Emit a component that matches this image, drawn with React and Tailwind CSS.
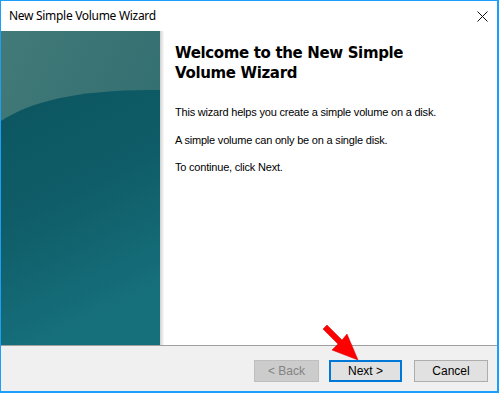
import React from "react";

function SidePanel() {
  return (
    <svg width="159" height="314" viewBox="0 0 159 314" className="block">
      <defs>
        <linearGradient id="top" x1="0" y1="0" x2="1" y2="1">
          <stop offset="0" stopColor="#437a79" />
          <stop offset="1" stopColor="#2a686c" />
        </linearGradient>
        <linearGradient id="bot" x1="0" y1="0" x2="0.3" y2="1">
          <stop offset="0" stopColor="#0b5560" />
          <stop offset="0.5" stopColor="#0f5d68" />
          <stop offset="1" stopColor="#16707c" />
        </linearGradient>
      </defs>
      <rect x="0" y="0" width="159" height="314" fill="url(#top)" />
      <path d="M0 90 C 30 70, 80 58, 159 59 L159 314 L0 314 Z" fill="url(#bot)" />
    </svg>
  );
}

export default function App() {
  return (
    <div
      className="w-[499px] h-[393px] flex flex-col bg-white border-t border-l border-r-2 border-b-2 border-[#1a9ffb] overflow-hidden relative"
      style={{ fontFamily: '"Liberation Sans", Arial, sans-serif' }}
    >
      <div className="h-[30px] flex items-center justify-between pl-[8px] pr-[9px] shrink-0">
        <span
          className="text-[12px] text-black tracking-[-0.3px]"
          style={{ fontFamily: '"Noto Sans", "Open Sans", sans-serif' }}
        >
          New Simple Volume Wizard
        </span>
        <svg width="11" height="11" viewBox="0 0 11 11">
          <path d="M0.5 0.5 L10.5 10.5 M10.5 0.5 L0.5 10.5" stroke="#111" strokeWidth="1" />
        </svg>
      </div>
      <div className="flex h-[314px] shrink-0">
        <SidePanel />
        <div className="w-[4px] bg-gradient-to-r from-[#d0d0d0] to-[#fbfbfb]" />
        <div className="flex-1 pl-[11px] pt-[12px]">
          <h1
            className="text-[15px] font-bold leading-[20px] text-black tracking-[-0.35px]"
            style={{ fontFamily: '"DejaVu Sans", Verdana, sans-serif' }}
          >
            Welcome to the New Simple
            <br />
            Volume Wizard
          </h1>
          <p className="text-[11px] text-black mt-[22px] leading-[14px] tracking-[-0.2px]">
            This wizard helps you create a simple volume on a disk.
          </p>
          <p className="text-[11px] text-black mt-[14px] leading-[14px] tracking-[-0.2px]">
            A simple volume can only be on a single disk.
          </p>
          <p className="text-[11px] text-black mt-[13px] leading-[14px] tracking-[-0.2px]">
            To continue, click Next.
          </p>
        </div>
      </div>
      <div className="h-px bg-[#a0a0a0] shrink-0" />
      <div className="flex-1 bg-[#f0f0f0] flex items-start pt-[14px] pl-[253px]">
        <button className="w-[65px] h-[22px] bg-[#cccccc] border border-[#bfbfbf] text-[12px] text-[#838383]">
          &lt; Back
        </button>
        <button className="ml-[10px] w-[73px] h-[22px] bg-[#e1e1e1] border-2 border-[#0078d7] text-[12px] text-black">
          Next &gt;
        </button>
        <button className="ml-[12px] w-[74px] h-[22px] bg-[#e1e1e1] border border-[#adadad] text-[12px] text-black">
          Cancel
        </button>
      </div>
      <svg
        className="absolute left-[318px] top-[320px]"
        width="46"
        height="44"
        viewBox="0 0 46 44"
      >
        <path d="M4 8 L8 4 L23 19 L28 13 L39 39 L13 29 L19 23 Z" fill="#ff0000" stroke="#cc0000" strokeWidth="0.5" />
      </svg>
    </div>
  );
}
